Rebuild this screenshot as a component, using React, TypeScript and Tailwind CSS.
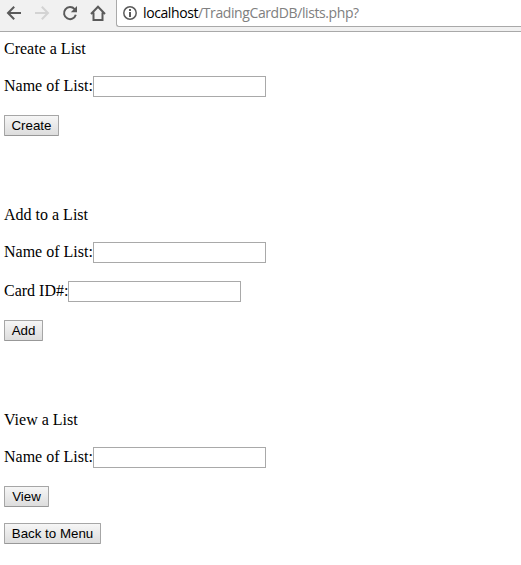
import React from "react";

function Toolbar() {
  return (
    <header className="flex h-8 border-b border-[#a9a9a9] bg-[#f1f1f1]">
      <svg className="block shrink-0" width="116" height="31" viewBox="0 0 116 31" fill="none" strokeWidth="2">
        <path d="M21 13H8.5M14.2 6.8L8 13l6.2 6.2" stroke="#5a5a5a" />
        <path d="M35 13h12.5M41.8 6.8L48 13l-6.2 6.2" stroke="#d3d3d3" />
        <path d="M74.6 9.2A6 6 0 1 0 75.8 14.8" stroke="#5a5a5a" />
        <path d="M77 6v6.2h-6.2z" fill="#5a5a5a" />
        <path d="M91 14l7-7.2 7 7.2M93.5 12.5V20h9v-7.5" stroke="#5a5a5a" />
      </svg>
      <div className="flex h-[27px] flex-1 items-start overflow-hidden rounded-bl-[3px] border-b border-l border-[#a9a9a9] bg-white pl-[6px]">
        <svg className="mt-[6px] block shrink-0" width="14" height="14" viewBox="0 0 14 14">
          <circle cx="7" cy="7" r="6.2" fill="none" stroke="#5a5a5a" strokeWidth="1.5" />
          <path d="M6 3h2v2H6zM6 6h2v5H6z" fill="#5a5a5a" />
        </svg>
        <span className="ml-[6px] mt-[3px] whitespace-nowrap font-['Open_Sans',sans-serif] text-[14px] leading-5 tracking-[-0.4px] text-[#808080]">
          <span className="text-black">localhost</span>/TradingCardDB/lists.php?
        </span>
      </div>
    </header>
  );
}

function Field({ label, labelWidth }: { label: string; labelWidth: string }) {
  return (
    <label className="flex h-[21px] items-start">
      <span className={`${labelWidth} mt-px shrink-0 whitespace-nowrap leading-[18px]`}>{label}</span>
      <input type="text" className="h-[21px] w-[173px] border border-[#a9a9a9] bg-white px-px outline-none" />
    </label>
  );
}

function Button({ children, width }: { children: string; width: string }) {
  return (
    <button
      type="button"
      className={`${width} flex h-[21px] items-center justify-center whitespace-nowrap rounded-[1px] border border-[#a6a6a6] border-b-[#989898] bg-linear-to-b from-[#f6f6f6] to-[#dddddd] font-['Liberation_Sans',sans-serif] text-[13.333px] leading-[15px] text-black`}
    >
      {children}
    </button>
  );
}

export default function App() {
  return (
    <div className="h-[565px] w-full overflow-hidden bg-white font-['Liberation_Serif',serif] text-base leading-[18px] text-black">
      <Toolbar />
      <main className="flex flex-col gap-[70px] pl-1 pt-2">
        <form className="flex flex-col gap-[18px]">
          <p>Create a List</p>
          <Field label="Name of List:" labelWidth="w-[89px]" />
          <Button width="w-[55px]">Create</Button>
        </form>
        <form className="flex flex-col gap-[18px]">
          <p>Add to a List</p>
          <Field label="Name of List:" labelWidth="w-[89px]" />
          <Field label="Card ID#:" labelWidth="w-[64px]" />
          <Button width="w-[39px]">Add</Button>
        </form>
        <div className="flex flex-col gap-4">
          <form className="flex flex-col gap-[18px]">
            <p>View a List</p>
            <Field label="Name of List:" labelWidth="w-[89px]" />
            <Button width="w-[45px]">View</Button>
          </form>
          <Button width="w-[97px]">Back to Menu</Button>
        </div>
      </main>
    </div>
  );
}
